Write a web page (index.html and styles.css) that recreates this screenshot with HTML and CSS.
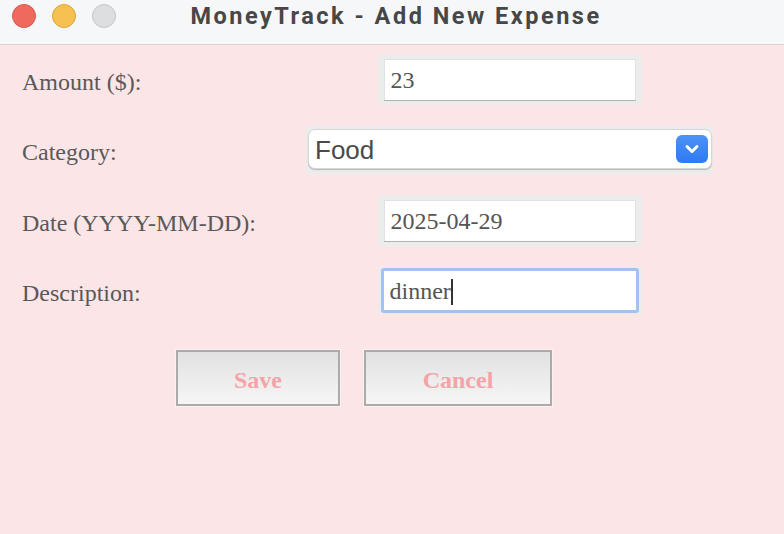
FILE: index.html
```html
<!DOCTYPE html>
<html>
<head>
<meta charset="utf-8">
<title>MoneyTrack - Add New Expense</title>
<link rel="stylesheet" href="styles.css">
</head>
<body>
<div class="window">
  <header class="titlebar">
    <div class="lights">
      <span class="light red"></span>
      <span class="light yellow"></span>
      <span class="light gray"></span>
    </div>
    <div class="title">MoneyTrack - Add New Expense</div>
  </header>
  <main class="content">
    <form class="form">
      <label class="label">Amount ($):</label>
      <div class="entry-wrap"><div class="entry">23</div></div>

      <label class="label">Category:</label>
      <div class="select-wrap">
        <div class="select">
          <span class="select-value">Food</span>
          <span class="select-btn">
            <svg width="16" height="12" viewBox="0 0 16 12"><path d="M3 3.5 L8 8.5 L13 3.5" fill="none" stroke="#fff" stroke-width="3" stroke-linecap="round" stroke-linejoin="round"/></svg>
          </span>
        </div>
      </div>

      <label class="label">Date (YYYY-MM-DD):</label>
      <div class="entry-wrap"><div class="entry">2025-04-29</div></div>

      <label class="label">Description:</label>
      <div class="entry-wrap focus"><div class="entry">dinner<span class="caret"></span></div></div>
    </form>
    <div class="buttons">
      <button type="button" class="btn save">Save</button>
      <button type="button" class="btn cancel">Cancel</button>
    </div>
  </main>
</div>
</body>
</html>
```

FILE: styles.css
```css
* { box-sizing: border-box; }
html, body { margin: 0; padding: 0; }
body {
  width: 784px;
  height: 534px;
  overflow: hidden;
  background: #fbe5e7;
}
.window { display: flex; flex-direction: column; height: 534px; }
.titlebar {
  position: relative;
  height: 45px;
  background: #f6f7f9;
  border-bottom: 1px solid #e4cfd0;
  display: flex;
  align-items: center;
  justify-content: center;
}
.lights {
  position: absolute;
  left: 12px;
  top: 4px;
  display: flex;
  gap: 16px;
}
.light {
  width: 24px;
  height: 24px;
  border-radius: 50%;
  display: block;
}
.red { background: #ee6a5f; border: 1px solid #d55a50; }
.yellow { background: #f6c150; border: 1px solid #dca73c; }
.gray { background: #dddee0; border: 1px solid #c6c7c9; }
.title {
  font-family: Roboto, "Liberation Sans", sans-serif;
  font-weight: 700;
  font-size: 23.5px;
  letter-spacing: 2.5px;
  color: #474747;
  margin-top: -13px;
  margin-left: 8px;
}
.content { flex: 1; padding: 9px 0 0 22px; }
.form {
  display: grid;
  grid-template-columns: 284px 407px;
  grid-template-rows: 51px 48px 51px 47px;
  row-gap: 21px;
  align-items: center;
}
.label {
  font-family: "Liberation Serif", "Times New Roman", serif;
  font-size: 24px;
  color: #595959;
  padding-top: 5px;
}
.entry-wrap {
  justify-self: center;
  width: 264px;
  height: 100%;
  background: #ececec;
  padding: 5px 6px;
}
.entry {
  height: 41px;
  background: #fff;
  border-top: 1px solid #e2e2e2;
  border-left: 1px solid #e2e2e2;
  border-right: 1px solid #e2e2e2;
  box-shadow: 0 1px 0 #b3b3b3;
  font-family: "Liberation Serif", "Times New Roman", serif;
  font-size: 24px;
  color: #555;
  padding: 1px 6px 0;
  display: flex;
  align-items: center;
}
.entry-wrap.focus { padding: 1px 3px; background: #ececec; }
.entry-wrap.focus .entry {
  height: 45px;
  border: 3px solid #a2c2ef;
  border-radius: 3px;
  box-shadow: none;
  padding: 2px 5px 0 6px;
}
.caret {
  display: inline-block;
  width: 2px;
  height: 26px;
  background: #333;
}
.select-wrap {
  height: 100%;
  background: #ececec;
  padding: 3px 1px 5px 2px;
}
.select {
  height: 40px;
  background: #fff;
  border: 1px solid #d6d6d6;
  border-radius: 7px;
  box-shadow: 0 1px 1px #b8b8b8;
  display: flex;
  align-items: center;
  justify-content: space-between;
  padding: 0 3px 0 6px;
}
.select-value {
  font-family: "Liberation Sans", Arial, sans-serif;
  font-size: 26px;
  color: #4a4a4a;
  margin-top: 3px;
}
.select-btn {
  width: 32px;
  height: 28px;
  border-radius: 6px;
  background: linear-gradient(#4c92f8, #2f79f3);
  display: flex;
  align-items: center;
  justify-content: center;
}
.buttons {
  display: flex;
  gap: 24px;
  margin-top: 36px;
  padding-left: 154px;
}
.btn {
  height: 56px;
  border: 2px solid #ababab;
  background: linear-gradient(#e1e1e1, #f6f6f6);
  box-shadow: 0 0 0 1px #fdf0f0;
  font-family: "Liberation Serif", "Times New Roman", serif;
  font-weight: 700;
  font-size: 24px;
  color: #f4a3a7;
  padding: 5px 0 0;
}
.save { width: 164px; }
.cancel { width: 188px; }
```
